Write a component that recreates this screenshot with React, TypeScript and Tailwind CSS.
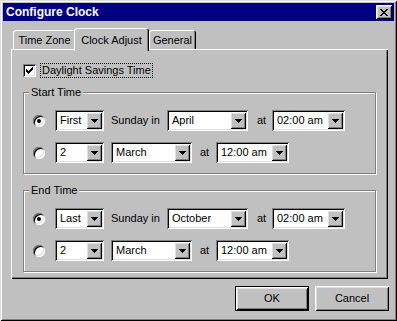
import React from 'react';

const raised =
  'shadow-[inset_1px_1px_#fff,inset_-1px_-1px_#000,inset_2px_2px_#dfdfdf,inset_-2px_-2px_#808080]';
const sunken =
  'shadow-[inset_1px_1px_#808080,inset_-1px_-1px_#fff,inset_2px_2px_#000,inset_-2px_-2px_#dfdfdf]';

const Arrow = () => (
  <svg width="7" height="4" viewBox="0 0 7 4" shapeRendering="crispEdges">
    <path d="M0 0h7v1H0zM1 1h5v1H1zM2 2h3v1H2zM3 3h1v1H3z" fill="#000" />
  </svg>
);

const Combo = ({ value, width }: { value: string; width: string }) => (
  <div className={`${width} h-[21px] bg-white ${sunken} flex items-center p-[2px]`}>
    <span className="flex-1 pl-[3px] leading-none">{value}</span>
    <span className={`w-[16px] h-[17px] bg-[#c0c0c0] ${raised} flex items-center justify-center`}>
      <Arrow />
    </span>
  </div>
);

const Radio = ({ checked }: { checked?: boolean }) => (
  <div className="w-[12px] h-[12px] rounded-full bg-white shadow-[inset_1px_1px_#808080,inset_-1px_-1px_#fff,inset_2px_2px_#000,inset_-2px_-2px_#dfdfdf] flex items-center justify-center">
    {checked && <div className="w-[4px] h-[4px] rounded-full bg-black" />}
  </div>
);

const Group = ({ title, first, month }: { title: string; first: string; month: string }) => (
  <fieldset className="w-[353px] border border-[#808080] shadow-[inset_1px_1px_#fff,1px_1px_#fff] pb-[10px]">
    <legend className="ml-[5px] px-[2px] bg-[#c0c0c0] leading-[13px]">{title}</legend>
    <div className="flex flex-col gap-[11px] pt-[11px] pl-[9px]">
      <div className="flex items-center h-[21px]">
        <Radio checked />
        <div className="ml-[10px]">
          <Combo value={first} width="w-[49px]" />
        </div>
        <span className="ml-[7px] w-[56px]">Sunday in</span>
        <Combo value={month} width="w-[81px]" />
        <span className="ml-[9px] w-[15px]">at</span>
        <Combo value="02:00 am" width="w-[73px]" />
      </div>
      <div className="flex items-center h-[21px]">
        <Radio />
        <div className="ml-[10px]">
          <Combo value="2" width="w-[49px]" />
        </div>
        <div className="ml-[7px]">
          <Combo value="March" width="w-[81px]" />
        </div>
        <span className="ml-[8px] w-[16px]">at</span>
        <Combo value="12:00 am" width="w-[73px]" />
      </div>
    </div>
  </fieldset>
);

export default function App() {
  return (
    <div className="w-[397px] h-[321px] bg-[#c0c0c0] p-[3px] flex flex-col font-['Liberation_Sans',Arial,sans-serif] text-[11px] text-black shadow-[inset_1px_1px_#dfdfdf,inset_-1px_-1px_#000,inset_2px_2px_#fff,inset_-2px_-2px_#808080] select-none">
      {/* Title bar */}
      <div className="h-[18px] bg-[#000080] flex items-center justify-between pl-[3px] pr-[2px]">
        <span className="text-white font-bold text-[12px] leading-none">Configure Clock</span>
        <button className={`w-[16px] h-[14px] bg-[#c0c0c0] ${raised} flex items-center justify-center`}>
          <svg width="8" height="7" viewBox="0 0 8 7" shapeRendering="crispEdges">
            <path
              d="M0 0h2v1H0zM6 0h2v1H6zM1 1h2v1H1zM5 1h2v1H5zM2 2h4v1H2zM3 3h2v1H3zM2 4h4v1H2zM1 5h2v1H1zM5 5h2v1H5zM0 6h2v1H0zM6 6h2v1H6z"
              fill="#000"
            />
          </svg>
        </button>
      </div>

      <div className="mt-[7px] ml-[8px] flex flex-col">
        {/* Tabs */}
        <div className="h-[21px] flex items-end pl-[2px]">
          <div className="w-[63px] h-[19px] rounded-t-[3px] shadow-[inset_1px_1px_#fff,inset_-1px_0_#000,inset_-2px_0_#808080] flex items-center justify-center pt-[2px]">
            Time Zone
          </div>
          <div className="relative z-10 -ml-[2px] w-[75px] h-[23px] -mb-[2px] rounded-t-[3px] bg-[#c0c0c0] shadow-[inset_1px_1px_#fff,inset_-1px_0_#000,inset_-2px_0_#808080] flex items-start justify-center pt-[4px]">
            Clock Adjust
          </div>
          <div className="w-[47px] h-[19px] rounded-t-[3px] shadow-[inset_1px_1px_#fff,inset_-1px_0_#000,inset_-2px_0_#808080] flex items-center justify-center pt-[2px]">
            General
          </div>
        </div>

        {/* Panel */}
        <div className="w-[377px] h-[230px] shadow-[inset_1px_1px_#fff,inset_-1px_-1px_#000,inset_-2px_-2px_#808080] pl-[12px] pt-[13px] flex flex-col">
          <div className="flex items-center h-[17px]">
            <div className={`w-[13px] h-[13px] bg-white ${sunken} flex items-center justify-center`}>
              <svg width="7" height="7" viewBox="0 0 7 7" shapeRendering="crispEdges">
                <path d="M6 0h1v3H6zM5 1h1v3H5zM4 2h1v3H4zM3 3h1v3H3zM2 4h1v3H2zM1 3h1v3H1zM0 2h1v3H0z" fill="#000" />
              </svg>
            </div>
            <span className="ml-[4px] px-[1px] border border-dotted border-black leading-[13px]">
              Daylight Savings Time
            </span>
          </div>

          <div className="mt-[7px]">
            <Group title="Start Time" first="First" month="April" />
          </div>
          <div className="mt-[10px]">
            <Group title="End Time" first="Last" month="October" />
          </div>
        </div>

        {/* Buttons */}
        <div className="mt-[7px] w-[378px] flex justify-end gap-[6px]">
          <button className="w-[74px] h-[25px] border border-black shadow-[inset_1px_1px_#fff,inset_-1px_-1px_#000,inset_2px_2px_#dfdfdf,inset_-2px_-2px_#808080] flex items-center justify-center">
            OK
          </button>
          <button className={`w-[74px] h-[25px] ${raised} flex items-center justify-center`}>
            Cancel
          </button>
        </div>
      </div>
    </div>
  );
}
